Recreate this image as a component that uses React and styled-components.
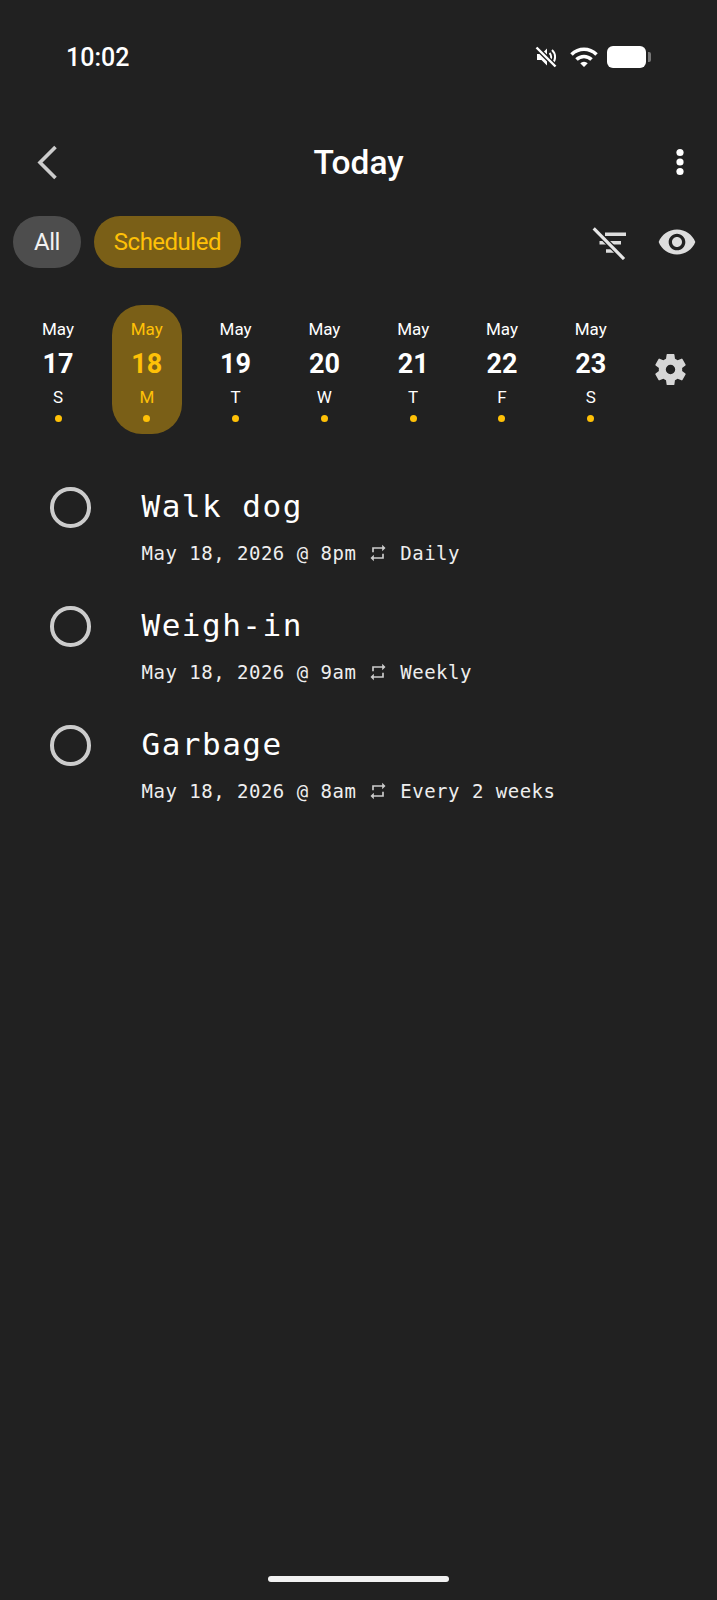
import React from 'react'
import styled, { createGlobalStyle } from 'styled-components'
import { MdRepeat, MdVisibility, MdWifi } from 'react-icons/md'

const GlobalStyle = createGlobalStyle`
  html, body { margin: 0; padding: 0; background: #212121; }
  * { box-sizing: border-box; }
`

const Screen = styled.div`
  width: 717px;
  height: 1600px;
  background: #212121;
  color: #fff;
  font-family: Roboto, "Liberation Sans", sans-serif;
  display: flex;
  flex-direction: column;
  position: relative;
  overflow: hidden;
`

const StatusBar = styled.div`
  height: 114px;
  padding: 0 65px 0 66px;
  display: flex;
  align-items: center;
  justify-content: space-between;
`

const Clock = styled.span`
  font-size: 25px;
  font-weight: 500;
`

const StatusIcons = styled.div`
  display: flex;
  align-items: center;
`

const Battery = styled.div`
  width: 39px;
  height: 22px;
  margin-left: 8px;
  margin-right: 6px;
  background: #fff;
  border-radius: 6px;
  position: relative;
  &::after {
    content: '';
    position: absolute;
    left: 41px;
    top: 6px;
    width: 3px;
    height: 10px;
    border-radius: 0 2px 2px 0;
    background: #777;
  }
`

const Header = styled.header`
  height: 96px;
  padding: 0 32px 0 33.5px;
  display: flex;
  align-items: center;
  justify-content: space-between;
  position: relative;
`

const Title = styled.h1`
  position: absolute;
  left: 0;
  right: 0;
  margin: 0;
  text-align: center;
  font-size: 33.5px;
  font-weight: 500;
  line-height: 41px;
`

const Toolbar = styled.div`
  height: 52px;
  margin-top: 6px;
  padding: 0 20px 0 13px;
  display: flex;
  align-items: center;
  gap: 13px;
`

const Chip = styled.div`
  height: 52px;
  padding: 0 ${p => (p.$active ? 20 : 21)}px;
  border-radius: 26px;
  display: flex;
  align-items: center;
  font-size: 24px;
  letter-spacing: -0.5px;
  background: ${p => (p.$active ? '#7a5f17' : '#4d4d4d')};
  color: ${p => (p.$active ? '#ffc107' : '#f2f2f2')};
`

const ToolIcons = styled.div`
  margin-left: auto;
  display: flex;
  align-items: center;
  gap: 30px;
  color: #ddd;
`

const WeekRow = styled.div`
  margin-top: 37px;
  padding-left: 23px;
  display: flex;
  align-items: center;
`

const Week = styled.div`
  display: grid;
  grid-template-columns: repeat(7, 70px);
  column-gap: 18.8px;
`

const Day = styled.div`
  height: 129px;
  padding-top: 14px;
  border-radius: 30px;
  display: flex;
  flex-direction: column;
  align-items: center;
  background: ${p => (p.$active ? '#7a5f17' : 'transparent')};
  color: ${p => (p.$active ? '#ffc107' : '#fff')};
`

const Month = styled.div`
  font-size: 17px;
  line-height: 20px;
`

const DayNum = styled.div`
  margin-top: 10px;
  font-size: 27px;
  font-weight: 700;
  line-height: 30px;
`

const Weekday = styled.div`
  margin-top: 8px;
  font-size: 17px;
  line-height: 20px;
`

const Dot = styled.div`
  margin-top: 8px;
  width: 7px;
  height: 7px;
  border-radius: 50%;
  background: #ffc107;
`

const GearWrap = styled.div`
  margin-left: 25px;
  display: flex;
`

const TaskList = styled.div`
  margin-top: 53px;
  display: flex;
  flex-direction: column;
`

const Task = styled.div`
  height: 119px;
  padding-left: 50px;
  display: flex;
  align-items: flex-start;
  gap: 51px;
`

const Circle = styled.div`
  width: 40.5px;
  height: 40.5px;
  flex-shrink: 0;
  border: 4px solid #ccc;
  border-radius: 50%;
`

const TaskBody = styled.div`
  font-family: "DejaVu Sans Mono", "Liberation Mono", monospace;
  display: flex;
  flex-direction: column;
`

const TaskName = styled.div`
  font-size: 31px;
  letter-spacing: 1.5px;
  line-height: 38px;
`

const TaskMeta = styled.div`
  margin-top: 15.5px;
  font-size: 19px;
  letter-spacing: 0.5px;
  line-height: 24px;
  white-space: pre;
  display: flex;
  align-items: center;
  color: #eee;
`

const HomeBar = styled.div`
  position: absolute;
  left: 268px;
  bottom: 18px;
  width: 181px;
  height: 6px;
  border-radius: 3px;
  background: #f2f2f2;
`

const days = [
  ['17', 'S'], ['18', 'M'], ['19', 'T'], ['20', 'W'], ['21', 'T'], ['22', 'F'], ['23', 'S'],
]

const tasks = [
  { name: 'Walk dog', date: 'May 18, 2026 @ 8pm', repeat: 'Daily' },
  { name: 'Weigh-in', date: 'May 18, 2026 @ 9am', repeat: 'Weekly' },
  { name: 'Garbage', date: 'May 18, 2026 @ 8am', repeat: 'Every 2 weeks' },
]

function MutedIcon() {
  return (
    <svg width="24" height="24" viewBox="0 0 24 24" fill="none">
      <path d="M3 9h4.5l5.5-5.5v17L7.5 15H3z" fill="#fff" />
      <path d="M15.5 8a5.5 5.5 0 0 1 0 8M18 5a9.5 9.5 0 0 1 0 14" stroke="#fff" strokeWidth="2" />
      <path d="M2.5 2.5l19 19" stroke="#212121" strokeWidth="5" />
      <path d="M2.5 2.5l19 19" stroke="#fff" strokeWidth="2.4" />
    </svg>
  )
}

function BackIcon() {
  return (
    <svg width="30" height="40" viewBox="0 0 30 40" fill="none">
      <path d="M21.5 5L6 20.5 21.5 36" stroke="#ccc" strokeWidth="3.6" />
    </svg>
  )
}

function KebabIcon() {
  return (
    <svg width="10" height="34" viewBox="0 0 10 34" fill="#fff">
      <circle cx="5" cy="7.5" r="3.6" />
      <circle cx="5" cy="17" r="3.6" />
      <circle cx="5" cy="26.5" r="3.6" />
    </svg>
  )
}

function FilterOffIcon() {
  return (
    <svg width="36" height="36" viewBox="0 0 36 36" fill="none">
      <path d="M14 10.3h21M8.5 18.7H30M15 27h8.5" stroke="#ddd" strokeWidth="3.6" />
      <path d="M2.7 4.3L33 35" stroke="#212121" strokeWidth="5.5" />
      <path d="M2.7 4.3L33 35" stroke="#e6e6e6" strokeWidth="3.2" />
    </svg>
  )
}

function GearIcon() {
  return (
    <svg width="39" height="39" viewBox="0 0 24 24" fill="#d6d6d6" fillRule="evenodd">
      <path d="M19.14 12.94c.04-.3.06-.61.06-.94s-.02-.64-.07-.94l2.03-1.58a.49.49 0 0 0 .12-.61l-1.92-3.32a.49.49 0 0 0-.59-.22l-2.39.96c-.5-.38-1.03-.7-1.62-.94l-.36-2.54a.48.48 0 0 0-.48-.41h-3.84a.47.47 0 0 0-.47.41l-.36 2.54c-.59.24-1.13.57-1.62.94l-2.39-.96a.48.48 0 0 0-.59.22L2.74 8.87a.47.47 0 0 0 .12.61l2.03 1.58c-.05.3-.09.63-.09.94s.02.64.07.94l-2.03 1.58a.49.49 0 0 0-.12.61l1.92 3.32c.12.22.37.29.59.22l2.39-.96c.5.38 1.03.7 1.62.94l.36 2.54c.05.24.24.41.48.41h3.84c.24 0 .44-.17.47-.41l.36-2.54c.59-.24 1.13-.56 1.62-.94l2.39.96c.22.08.47 0 .59-.22l1.92-3.32a.47.47 0 0 0-.12-.61zM12 14.9a2.9 2.9 0 1 1 0-5.8 2.9 2.9 0 0 1 0 5.8z" />
    </svg>
  )
}

export default function App() {
  return (
    <Screen>
      <GlobalStyle />
      <StatusBar>
        <Clock>10:02</Clock>
        <StatusIcons>
          <MutedIcon />
          <MdWifi size={30} color="#fff" style={{ marginLeft: 11 }} />
          <Battery />
        </StatusIcons>
      </StatusBar>
      <Header>
        <BackIcon />
        <Title>Today</Title>
        <KebabIcon />
      </Header>
      <Toolbar>
        <Chip>All</Chip>
        <Chip $active>Scheduled</Chip>
        <ToolIcons>
          <FilterOffIcon />
          <MdVisibility size={40} />
        </ToolIcons>
      </Toolbar>
      <WeekRow>
        <Week>
          {days.map(([num, letter]) => (
            <Day key={num} $active={num === '18'}>
              <Month>May</Month>
              <DayNum>{num}</DayNum>
              <Weekday>{letter}</Weekday>
              <Dot />
            </Day>
          ))}
        </Week>
        <GearWrap>
          <GearIcon />
        </GearWrap>
      </WeekRow>
      <TaskList>
        {tasks.map(t => (
          <Task key={t.name}>
            <Circle />
            <TaskBody>
              <TaskName>{t.name}</TaskName>
              <TaskMeta>
                {t.date + ' '}
                <MdRepeat size={20} color="#ccc" />
                {' ' + t.repeat}
              </TaskMeta>
            </TaskBody>
          </Task>
        ))}
      </TaskList>
      <HomeBar />
    </Screen>
  )
}
